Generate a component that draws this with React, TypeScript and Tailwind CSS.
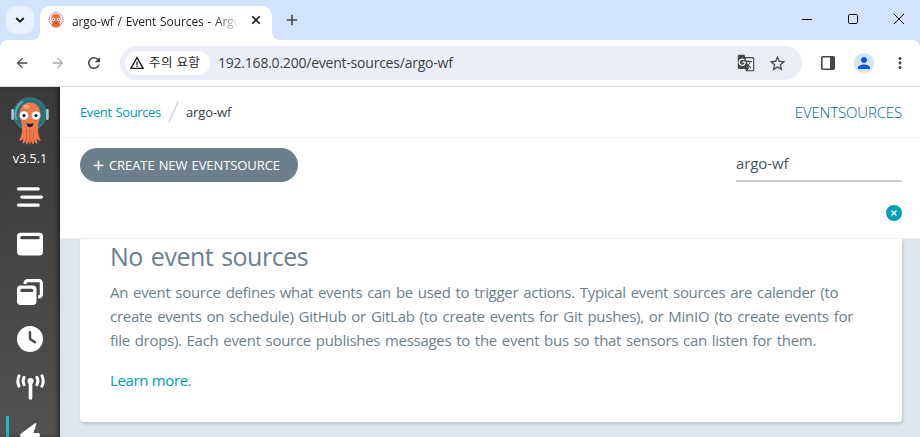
import React from "react";
import {
  MdArrowBack,
  MdArrowForward,
  MdGTranslate,
  MdMoreVert,
  MdPerson,
  MdRefresh,
  MdStarBorder,
  MdWarningAmber,
} from "react-icons/md";
import {
  FaBarsStaggered,
  FaClock,
  FaPlus,
  FaWindowMaximize,
  FaWindowRestore,
  FaCircleXmark,
} from "react-icons/fa6";

function Octopus({ className }: { className: string }) {
  return (
    <svg viewBox="0 0 38 51" className={className}>
      <circle cx="19" cy="18" r="16.8" fill="#2b7c83" />
      <circle cx="19" cy="18" r="15" fill="#2c6e74" />
      <path d="M5.5 24 A15 15 0 0 1 12 5.5" fill="none" stroke="#6fb0b5" strokeWidth="1.6" />
      <rect x="0.3" y="13" width="2.6" height="11" rx="1.2" fill="#aacbe4" />
      <rect x="35.1" y="13" width="2.6" height="11" rx="1.2" fill="#aacbe4" />
      <path
        d="M19 6.500c-6.200 0-10 4.500-10 10.500 0 6 2 9 2 14 0 6-.5 10-3 13.500 2.200.3 3.500-.5 4.300-2 0 2-.5 3.500-1 5 2 0 3-1.200 3.500-3l.5 4c1.500-.6 2.200-2 2.400-4l1.300 4.500 1.300-4.500c.2 2 .9 3.400 2.400 4l.5-4c.5 1.800 1.500 3 3.500 3-.5-1.500-1-3-1-5 .8 1.500 2.100 2.300 4.300 2-2.500-3.500-3-7.500-3-13.500 0-5 2-8 2-14 0-6-3.800-10.500-10-10.500z"
        fill="#ee794b"
      />
      <path d="M15.500 33v12M19 33v13M22.500 33v12" stroke="#ce5935" strokeWidth=".8" />
      <ellipse cx="15.500" cy="10.500" rx="3" ry="2" fill="#f5a585" />
      <circle cx="13" cy="19.500" r="4.600" fill="#fff" stroke="#d8643e" strokeWidth=".5" />
      <circle cx="25" cy="19.500" r="4.600" fill="#fff" stroke="#d8643e" strokeWidth=".5" />
      <circle cx="13" cy="19.500" r="1.500" fill="#111" />
      <circle cx="25" cy="19.500" r="1.500" fill="#111" />
      <path d="M15.500 27.200c2 .7 5 .7 7 0-.3 2.600-1.700 4-3.500 4s-3.200-1.400-3.500-4z" fill="#231f20" />
    </svg>
  );
}

function Favicon() {
  return (
    <svg viewBox="0 0 16 16" className="h-4 w-4 shrink-0">
      <circle cx="8" cy="7.500" r="7" fill="#fff" stroke="#9a95d8" strokeWidth=".9" />
      <path d="M8 1.800c-3 0-4.600 2-4.600 4.700 0 2 .8 3 .8 5L3.500 14l3 1.500h3l3-1.500-.7-2.500c0-2 .8-3 .8-5C12.600 3.800 11 1.800 8 1.800z" fill="#ef6c3f" />
      <circle cx="5.600" cy="7.300" r="1.600" fill="#fff" />
      <circle cx="10.400" cy="7.300" r="1.600" fill="#fff" />
      <circle cx="5.600" cy="7.300" r=".6" fill="#222" />
      <circle cx="10.400" cy="7.300" r=".6" fill="#222" />
      <path d="M6.700 11h2.600" stroke="#6b2a1a" strokeWidth="1" />
    </svg>
  );
}

function Antenna({ className }: { className: string }) {
  return (
    <svg viewBox="0 0 29 26" className={className} fill="none" stroke="currentColor" strokeLinecap="round">
      <circle cx="14.500" cy="7" r="3.100" fill="currentColor" stroke="none" />
      <path d="M14.500 8v16" strokeWidth="3.600" />
      <path d="M8.100 3.200a8 8 0 0 0 0 7.600M20.900 3.200a8 8 0 0 1 0 7.600" strokeWidth="3" />
      <path d="M3 1.800a12.500 12.500 0 0 0 0 10.400M26 1.800a12.500 12.500 0 0 1 0 10.400" strokeWidth="3" />
    </svg>
  );
}

function Bolt({ className }: { className: string }) {
  return (
    <svg viewBox="0 0 26 27" className={className} fill="currentColor" stroke="currentColor" strokeLinejoin="round">
      <path d="M17.500 2L3 12.800l.6 2.200h6.600L7.400 25 21.200 13.800l-.6-2h-6.400z" strokeWidth="1.800" />
    </svg>
  );
}

function TabStrip() {
  return (
    <div className="flex h-10 items-start bg-[#d3e2fd]">
      <div className="ml-1.5 mt-1.5 flex h-7 w-7 items-center justify-center rounded-[10px] bg-[#e9f0fe]">
        <svg viewBox="0 0 10 6" className="h-1.5 w-2.5">
          <path d="M1.200 1l3.800 3.700L8.800 1" fill="none" stroke="#1f1f1f" strokeWidth="1.800" />
        </svg>
      </div>
      <svg viewBox="0 0 8 8" className="-ml-0.5 mt-8 h-2 w-2">
        <path d="M8 0v8H0a8 8 0 0 0 8-8z" fill="#fff" />
      </svg>
      <div className="mt-1.5 flex h-[34px] w-[232px] items-start rounded-t-[10px] bg-white pl-2 pt-[6px]">
        <Favicon />
        <div className="ml-2 mt-px h-[17px] w-[168px] overflow-hidden whitespace-nowrap bg-linear-to-r from-[#1f1f1f] from-85% to-transparent bg-clip-text text-[12px] leading-[17px] tracking-[-0.1px] [word-spacing:0.8px] text-transparent">
          argo-wf / Event Sources - Argo
        </div>
        <svg viewBox="0 0 10 10" className="ml-[11px] mt-[3px] h-2.5 w-2.5">
          <path d="M1.200 1.200l7.600 7.600M8.800 1.200L1.200 8.800" stroke="#1f1f1f" strokeWidth="1.600" />
        </svg>
      </div>
      <svg viewBox="0 0 8 8" className="mt-8 h-2 w-2">
        <path d="M0 0v8h8a8 8 0 0 1-8-8z" fill="#fff" />
      </svg>
      <svg viewBox="0 0 12 12" className="ml-[6px] mt-[14px] h-3 w-3">
        <path d="M6 .8v10.400M.8 6h10.400" stroke="#474747" strokeWidth="1.600" />
      </svg>
      <div className="ml-auto mr-4 mt-[14px] flex gap-9 text-black">
        <svg viewBox="0 0 10 10" className="h-2.5 w-2.5">
          <path d="M0 5.500h10" stroke="currentColor" />
        </svg>
        <svg viewBox="0 0 10 10" className="h-2.5 w-2.5">
          <rect x=".5" y=".5" width="9" height="9" rx="1.200" fill="none" stroke="currentColor" />
        </svg>
        <svg viewBox="0 0 10 10" className="h-2.5 w-2.5">
          <path d="M0 0l10 10M10 0L0 10" stroke="currentColor" />
        </svg>
      </div>
    </div>
  );
}

function AddressBar() {
  return (
    <div className="bg-[#d3e2fd]">
      <div className="flex h-[47px] items-center rounded-t-lg border-b border-[#dcdde0] bg-white text-[#474747]">
        <MdArrowBack className="ml-3.5 h-4 w-4" />
        <MdArrowForward className="ml-5 h-4 w-4 text-[#a9a9a9]" />
        <MdRefresh className="ml-[19px] h-[18px] w-[18px]" />
        <div className="ml-[17px] flex h-[34px] w-[682px] items-center rounded-full bg-[#ebeef7] pl-[5px]">
          <div className="flex h-6 w-[85px] items-center rounded-full bg-white pl-1">
            <MdWarningAmber className="h-4 w-4 text-[#1f1f1f]" />
            <span className="ml-1 whitespace-nowrap text-[12.500px] leading-4 tracking-[0.4px] text-[#1f1f1f]">주의 요함</span>
          </div>
          <span className="ml-2 whitespace-nowrap text-[14px] leading-5 tracking-[-0.22px] text-[#3c3f43]">
            192.168.0.200/event-sources/argo-wf
          </span>
          <MdGTranslate className="ml-auto h-[18px] w-[18px]" />
          <MdStarBorder className="ml-[13px] mr-[15px] h-[19px] w-[19px]" />
        </div>
        <svg viewBox="0 0 14 14" className="ml-[19px] h-3.5 w-3.5">
          <rect x=".8" y=".8" width="12.400" height="12.400" rx="1" fill="none" stroke="currentColor" strokeWidth="1.600" />
          <path d="M9 1h4.200v12H9z" fill="currentColor" />
        </svg>
        <div className="ml-[19px] flex h-5 w-5 items-center justify-center rounded-full bg-[#d3e2fd]">
          <MdPerson className="h-[18px] w-[18px] text-[#0b57d0]" />
        </div>
        <MdMoreVert className="ml-[17px] h-[18px] w-[18px]" />
      </div>
    </div>
  );
}

function Sidebar() {
  return (
    <nav className="flex w-[60px] shrink-0 flex-col items-center overflow-hidden bg-linear-to-b from-[#3a3a3a] to-[#515151] text-white shadow-[inset_-3px_0_4px_-1px_rgba(0,0,0,0.5)]">
      <Octopus className="mt-[9px] h-[51px] w-[38px] shrink-0" />
      <span className="mt-0.5 text-[12.500px] leading-5">v3.5.1</span>
      <FaBarsStaggered className="mt-[15px] h-[26px] w-[26px] shrink-0" />
      <FaWindowMaximize className="mt-[21px] h-[26px] w-[26px] shrink-0" />
      <FaWindowRestore className="mt-[22px] h-[26px] w-[26px] shrink-0" />
      <FaClock className="mt-[21px] h-[26px] w-[26px] shrink-0" />
      <Antenna className="mt-[22px] h-[26px] w-[29px] shrink-0" />
      <div className="mt-4 flex h-12 w-12 shrink-0 items-start border-l-[3px] border-[#18bcc8] pl-[9px] pt-[6px]">
        <Bolt className="h-[27px] w-[26px]" />
      </div>
    </nav>
  );
}

function Page() {
  return (
    <main className="flex min-w-0 grow flex-col bg-[#dee6eb]">
      <header className="flex h-[51px] shrink-0 items-center border-b border-[#eef0f1] bg-white pl-5 pr-[18px]">
        <a className="mt-px w-[81px] whitespace-nowrap text-[13px] tracking-[-0.4px] [word-spacing:1px] text-[#009eb2]">Event Sources</a>
        <svg viewBox="0 0 11 22" className="ml-[7px] h-[22px] w-[11px]">
          <path d="M.8 21.500L10.200.5" stroke="#c5d3da" strokeWidth="1.200" />
        </svg>
        <span className="ml-[7px] mt-px whitespace-nowrap text-[13px] tracking-[-0.1px] text-[#363c4a]">argo-wf</span>
        <span className="ml-auto whitespace-nowrap text-[15px] font-light tracking-[-0.15px] text-[#00657f]">EVENTSOURCES</span>
      </header>
      <section className="flex h-[101px] shrink-0 items-start justify-between border-b border-[#eef0f1] bg-white pl-5 pr-[18px] pt-2.5">
        <button className="flex h-[34px] w-[218px] items-center rounded-full bg-[#6d7f8b] pl-[13px] text-white">
          <FaPlus className="h-[13px] w-[11px]" />
          <span className="ml-[5px] mt-px whitespace-nowrap text-[13px] tracking-[-0.08px] [word-spacing:0.8px]">CREATE NEW EVENTSOURCE</span>
        </button>
        <div className="flex w-[166px] flex-col items-end">
          <div className="h-[34px] w-full border-b-2 border-[#cbcbcb] text-[15px] leading-[30px] tracking-[-0.1px] text-[#495763]">
            <span>argo-wf</span>
          </div>
          <FaCircleXmark className="mt-[23px] h-4 w-4 text-[#00a2b3]" />
        </div>
      </section>
      <section className="ml-5 mr-[18px] h-[183px] rounded-b bg-white pl-[30px] text-[#6d7f8b] shadow-[1px_2px_3px_rgba(130,150,150,0.4)]">
        <h4 className="-mt-px text-[25px] leading-9 tracking-[-0.5px] [word-spacing:2px]">
          <span>No event sources</span>
        </h4>
        <p className="mt-[6px] whitespace-nowrap text-[15px] leading-6 tracking-[-0.29px] [word-spacing:1.3px]">
          <span className="block w-fit">An event source defines what events can be used to trigger actions. Typical event sources are calender (to</span>
          <span className="block w-fit tracking-[-0.27px]">create events on schedule) GitHub or GitLab (to create events for Git pushes), or MinIO (to create events for</span>
          <span className="block w-fit tracking-[-0.3px]">file drops). Each event source publishes messages to the event bus so that sensors can listen for them.</span>
        </p>
        <p className="mt-4 text-[15px] leading-6 tracking-[-0.35px]">
          <a className="text-[#009eb2]">Learn more</a>.
        </p>
      </section>
    </main>
  );
}

export default function App() {
  return (
    <div className="flex h-[437px] w-[920px] flex-col overflow-hidden bg-white font-['Open_Sans','Noto_Sans_CJK_KR',sans-serif] font-normal">
      <TabStrip />
      <AddressBar />
      <div className="flex min-h-0 grow">
        <Sidebar />
        <Page />
      </div>
    </div>
  );
}
